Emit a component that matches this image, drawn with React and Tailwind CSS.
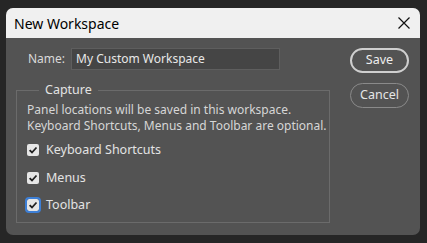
import React from "react";

const Check = ({ focused }) => (
  <span
    className={`flex h-[12px] w-[12px] items-center justify-center rounded-[2px] bg-[#e6e6e6] ${
      focused ? "outline outline-2 outline-[#3d7fd6]" : ""
    }`}
  >
    <svg width="10" height="10" viewBox="0 0 10 10">
      <path d="M1.6 5.2 L4 7.5 L8.5 2.5" fill="none" stroke="#222" strokeWidth="1.8" />
    </svg>
  </span>
);

const Option = ({ label, focused, className = "" }) => (
  <label className={`flex h-[16px] items-center gap-[7px] ${className}`}>
    <Check focused={focused} />
    <span>{label}</span>
  </label>
);

export default function App() {
  return (
    <div
      className="h-[243px] w-[427px] bg-[#262626] pl-[6px] pt-[8px]"
      style={{ fontFamily: '"Noto Sans", "Open Sans", sans-serif' }}
    >
      <div className="h-[227px] w-[414px] overflow-hidden rounded-[7px] bg-[#535353] text-[#e3e3e3]">
        {/* title bar */}
        <div className="flex h-[30px] items-center justify-between bg-[#f0f0f0] pl-[8px] pr-[10px] text-black">
          <span className="text-[14px]">New Workspace</span>
          <svg width="12" height="12" viewBox="0 0 12 12">
            <path d="M0.5 0.5 L11.5 11.5 M11.5 0.5 L0.5 11.5" stroke="#111" strokeWidth="1.2" />
          </svg>
        </div>

        <div className="flex justify-between pl-[10px] pr-[11px] pt-[10px]">
          {/* left */}
          <div className="flex flex-col">
            <div className="ml-[12px] flex items-center gap-[6px] text-[12px]">
              <span className="text-[#d9d9d9]">Name:</span>
              <div className="flex h-[22px] w-[209px] items-center border border-[#5e5e5e] bg-[#454545] px-[4px] text-[#e8e8e8]">
                My Custom Workspace
              </div>
            </div>

            <fieldset className="mt-[12px] h-[141px] w-[314px] border border-[#6b6b6b] pl-[10px] pr-0 pb-0 pt-0 text-[12px]">
              <legend className="ml-[12px] px-[6px] text-[12.5px] leading-[16px]">Capture</legend>
              <div className="mt-[4px] flex flex-col whitespace-nowrap text-[#d6d6d6]">
                <span className="leading-[16px]">Panel locations will be saved in this workspace.</span>
                <span className="leading-[16px]">Keyboard Shortcuts, Menus and Toolbar are optional.</span>
              </div>
              <div className="mt-[8px] flex flex-col text-[12.5px]">
                <Option label="Keyboard Shortcuts" />
                <Option label="Menus" className="mt-[12px]" />
                <Option label="Toolbar" focused className="mt-[11px]" />
              </div>
            </fieldset>
          </div>

          {/* right */}
          <div className="flex flex-col gap-[10px] text-[12.5px]">
            <button className="h-[25px] w-[59px] rounded-full border-2 border-[#cfcfcf] text-[#eeeeee]">
              Save
            </button>
            <button className="h-[25px] w-[59px] rounded-full border border-[#8a8a8a] text-[#e6e6e6]">
              Cancel
            </button>
          </div>
        </div>
      </div>
    </div>
  );
}
